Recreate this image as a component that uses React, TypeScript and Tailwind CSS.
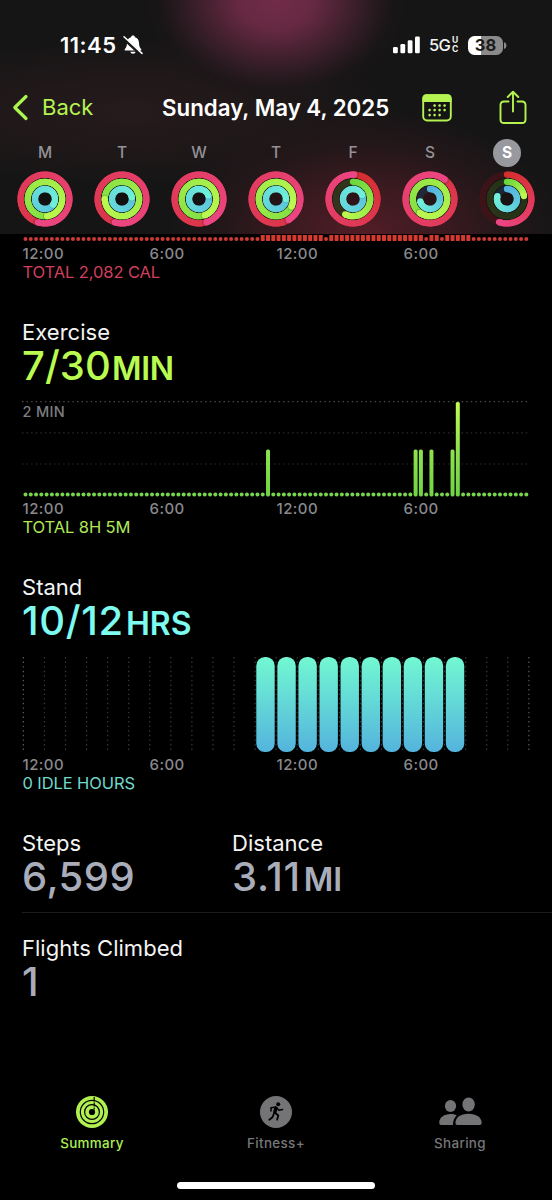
import React from "react";

type RGB = [number, number, number];
type Ring = { end: number; full: boolean };

const MOVE: [RGB, RGB] = [[212, 46, 46], [236, 70, 132]];
const EXERCISE: [RGB, RGB] = [[108, 214, 62], [188, 248, 80]];
const STAND: [RGB, RGB] = [[84, 178, 222], [112, 240, 218]];

const mix = (a: RGB, b: RGB, t: number) =>
  `rgb(${a.map((v, i) => Math.round(v + (b[i] - v) * t)).join(",")})`;

const at = (r: number, deg: number) => {
  const a = ((deg - 90) * Math.PI) / 180;
  return [28 + r * Math.cos(a), 28 + r * Math.sin(a)];
};

function Arc({ r, ring, colors, track }: { r: number; ring: Ring; colors: [RGB, RGB]; track: string }) {
  const w = 6.3;
  const start = ring.full ? ring.end - 358 : 0;
  const span = ring.end - start;
  const steps = Math.ceil(span / 9);
  const base = ring.full && ring.end > 20 ? 0.3 : 0;
  const [sx, sy] = at(r, start);
  const [ex, ey] = at(r, ring.end);
  const [dx, dy] = at(r, ring.end + 3.5);
  return (
    <g fill="none">
      <circle cx="28" cy="28" r={r} stroke={track} strokeWidth={w} />
      <circle cx={sx} cy={sy} r={w / 2} fill={mix(colors[0], colors[1], base)} />
      {Array.from({ length: steps }, (_, i) => {
        const a = start + (span * i) / steps;
        const b = Math.min(start + (span * (i + 1)) / steps + 8, ring.end);
        const [x1, y1] = at(r, a);
        const [x2, y2] = at(r, b);
        return (
          <path
            key={i}
            d={`M${x1} ${y1}A${r} ${r} 0 0 1 ${x2} ${y2}`}
            stroke={mix(colors[0], colors[1], base + ((1 - base) * (i + 0.5)) / steps)}
            strokeWidth={w}
          />
        );
      })}
      {ring.full && <circle cx={dx} cy={dy} r={w / 2} fill="#000" opacity=".16" />}
      <circle cx={ex} cy={ey} r={w / 2} fill={mix(colors[0], colors[1], 1)} />
    </g>
  );
}

const f = (end: number): Ring => ({ end, full: true });
const p = (end: number): Ring => ({ end, full: false });

const DAYS: { label: string; rings: [Ring, Ring, Ring] }[] = [
  { label: "M", rings: [f(197), f(173), f(125)] },
  { label: "T", rings: [f(197), f(270), f(82)] },
  { label: "W", rings: [f(162), f(160), f(70)] },
  { label: "T", rings: [f(149), f(116), f(92)] },
  { label: "F", rings: [f(3), p(207), f(66)] },
  { label: "S", rings: [f(37), f(216), p(256)] },
  { label: "S", rings: [p(199), p(80), p(286)] },
];

function Day({ label, rings, selected }: { label: string; rings: [Ring, Ring, Ring]; selected: boolean }) {
  return (
    <div className="flex w-[77px] flex-col items-center">
      <div
        className={
          selected
            ? "flex size-7 items-center justify-center rounded-full bg-[#98989f] text-[15.5px] font-bold text-white"
            : "flex size-7 items-center justify-center text-[15.5px] font-medium text-[#939297]"
        }
      >
        {label}
      </div>
      <svg className="mt-[4px] size-14" viewBox="0 0 56 56">
        <circle cx="28" cy="28" r="27" fill="#0c0c0c" opacity=".35" />
        <Arc r={24.4} ring={rings[0]} colors={MOVE} track="rgba(110,20,30,.4)" />
        <Arc r={17.2} ring={rings[1]} colors={EXERCISE} track="rgba(60,100,30,.4)" />
        <Arc r={10} ring={rings[2]} colors={STAND} track="rgba(30,70,100,.4)" />
      </svg>
    </div>
  );
}

const slotX = (i: number) => 3.5 + i * 5.272;

function MoveChart() {
  const low = new Set([57, 76, 79]);
  return (
    <svg className="block h-[10px] w-[508px]" viewBox="0 0 508 10">
      {Array.from({ length: 96 }, (_, i) =>
        i >= 45 && i <= 84 && !low.has(i) ? (
          <rect key={i} x={slotX(i) - 2} y="-2" width="4" height="7.9" rx=".6" fill="#d5392f" />
        ) : (
          <circle key={i} cx={slotX(i)} cy="3.9" r="2" fill="#cc3b35" />
        ),
      )}
    </svg>
  );
}

function ExerciseChart() {
  const bars: Record<number, number> = { 46: 47, 74: 47, 75: 47, 77: 47, 81: 47, 82: 94.5 };
  return (
    <svg className="block h-[98px] w-[508px]" viewBox="0 0 508 98">
      <defs>
        <linearGradient id="ex" gradientUnits="userSpaceOnUse" x1="0" y1="2" x2="0" y2="96">
          <stop offset="0" stopColor="#c4fb52" />
          <stop offset=".5" stopColor="#8fe24d" />
          <stop offset="1" stopColor="#70d445" />
        </linearGradient>
      </defs>
      {[1.7, 32.9, 64].map((y, i) => (
        <line key={y} x1="0" x2="507" y1={y} y2={y} stroke={i === 0 ? "#4c4c4e" : "#2e2e30"} strokeWidth="1.2" strokeDasharray="1.4 3.18" />
      ))}
      {Array.from({ length: 96 }, (_, i) =>
        bars[i] ? (
          <rect key={i} x={slotX(i) - 2} y={96.4 - bars[i]} width="4" height={bars[i]} rx="1.6" fill="url(#ex)" />
        ) : (
          <circle key={i} cx={slotX(i)} cy="94.4" r="2" fill="#78d550" />
        ),
      )}
    </svg>
  );
}

function StandChart() {
  return (
    <svg className="block h-[98px] w-[508px]" viewBox="0 0 508 98">
      <defs>
        <linearGradient id="st" x1="0" y1="0" x2="0" y2="1">
          <stop offset="0" stopColor="#72f8d2" />
          <stop offset="1" stopColor="#54b4dd" />
        </linearGradient>
      </defs>
      {Array.from({ length: 25 }, (_, i) => (
        <line
          key={i}
          x1={1.4 + i * 21.06}
          x2={1.4 + i * 21.06}
          y1="1"
          y2="95"
          stroke={i === 0 || i === 24 ? "#5a5a5c" : "#39393b"}
          strokeWidth="1.2"
          strokeDasharray="1.4 3.18"
        />
      ))}
      {Array.from({ length: 10 }, (_, i) => (
        <rect key={i} x={234.3 + i * 21.06} y="1.1" width="18.4" height="94.9" rx="8.6" fill="url(#st)" />
      ))}
    </svg>
  );
}

function Hours() {
  return (
    <div className="flex h-[18px] items-center pl-[0.5px] text-[15px] font-medium tracking-[0.45px] text-[#89898d]">
      <span className="w-[127px]">12:00</span>
      <span className="w-[127px]">6:00</span>
      <span className="w-[127px]">12:00</span>
      <span>6:00</span>
    </div>
  );
}

function Tab({ label, color, children }: { label: string; color: string; children: React.ReactNode }) {
  return (
    <div className={`flex w-[184px] flex-col items-center ${color}`}>
      <div className="flex h-8 items-center justify-center">{children}</div>
      <span className="mt-[6px] text-[13.4px] leading-[18px] font-medium tracking-[0.35px]">{label}</span>
    </div>
  );
}

const NAME = "h-7 text-[22px] leading-7 tracking-[0.02px] text-[#f4f4f4]";
const VALUE = "flex h-10 items-baseline text-[40px] leading-10 font-medium";
const TOTAL = "h-[18px] text-[16.5px] leading-[18px] tracking-[-0.1px] pl-[0.5px]";

export default function App() {
  return (
    <div className="flex h-[1200px] w-[552px] flex-col overflow-hidden bg-black font-['Inter',sans-serif] whitespace-nowrap">
      <header className="h-[234px] shrink-0 bg-[#151515] bg-[radial-gradient(ellipse_135px_105px_at_276px_0px,#702c49_0%,#662942_28%,#4a2232_48%,#2c1b22_70%,rgba(28,22,24,0.6)_86%,rgba(21,21,21,0)_100%),radial-gradient(ellipse_200px_125px_at_365px_234px,#521d26_0%,#3b1a20_38%,#24171a_70%,rgba(21,21,21,0)_100%),radial-gradient(ellipse_280px_75px_at_130px_112px,#261a1d_0%,#1f1819_50%,rgba(21,21,21,0)_100%)]">
        <div className="flex h-[90px] items-center pl-[60px]">
          <span className="w-[62px] text-[22px] font-semibold tracking-[0.5px] text-white">11:45</span>
          <svg className="size-[22px]" viewBox="0 0 22 22">
            <path d="M11 1.6c1.1 0 1.8.7 2 1.7 2.6.8 3.9 2.9 4 5.7.1 3.2.7 4.5 2 5.9.7.8.5 1.6-.6 1.600H3.600c-1.100 0-1.300-.8-.6-1.600 1.300-1.400 1.900-2.700 2-5.900.1-2.800 1.400-4.900 4-5.700.2-1 .9-1.700 2-1.700zM8.300 17.800h5.400c-.3 1.300-1.300 2-2.700 2s-2.400-.7-2.700-2z" fill="#fff" />
            <path d="M1.300 3.900 18.900 20.300" stroke="#191617" strokeWidth="3.4" />
            <path d="M2 2.700 20 19.400" stroke="#fff" strokeWidth="1.5" strokeLinecap="round" />
          </svg>
          <svg className="ml-[249px] h-[18px] w-[28px]" viewBox="0 0 28 18" fill="#fff">
            <rect x="0" y="11" width="4.8" height="6.3" rx="1.3" />
            <rect x="7.4" y="8" width="4.8" height="9.3" rx="1.3" />
            <rect x="14.7" y="4.3" width="4.8" height="13" rx="1.3" />
            <rect x="22" y=".5" width="4.8" height="16.8" rx="1.3" />
          </svg>
          <span className="ml-[8px] w-[23px] text-[16.5px] font-medium tracking-[-0.8px] text-[#f2f2f2]">5G</span>
          <span className="flex w-[7px] flex-col text-[8.5px] leading-[9px] font-bold text-[#f2f2f2]">
            <span>U</span>
            <span>C</span>
          </span>
          <span className="ml-[9px] flex h-[19px] w-[35px] items-center justify-center rounded-[6.5px] bg-[linear-gradient(90deg,#fff_38%,#8a8a8b_38%)] text-[16.5px] font-bold text-[#1c1c1c]">38</span>
          <svg className="ml-px h-[7px] w-[3px]" viewBox="0 0 3 7">
            <path d="M0 0q2.500 1.200 2.500 3.500T0 7z" fill="#8a8a8b" />
          </svg>
        </div>
        <div className="flex h-[35px] items-center text-[#b4f351]">
          <svg className="ml-[12px] h-[28px] w-[18px]" viewBox="0 0 18 28">
            <path d="M14 2.500 2.800 13.500 14 24.500" fill="none" stroke="#acf550" strokeWidth="3.200" strokeLinecap="round" strokeLinejoin="round" />
          </svg>
          <span className="ml-[12px] w-[120px] text-[22px]">Back</span>
          <span className="w-[260px] text-[22.3px] font-semibold text-white">Sunday, May 4, 2025</span>
          <svg className="h-[28px] w-[30px]" viewBox="0 0 30 28">
            <rect x="1.2" y="1.2" width="27.6" height="25.3" rx="4" fill="none" stroke="currentColor" strokeWidth="1.9" />
            <path d="M.4 8V4.500Q.4.300 4.500.3h21q4.100 0 4.100 4.200V8z" fill="currentColor" />
            {[[12, 11.5], [17, 11.5], [22, 11.5], [7, 16], [12, 16], [17, 16], [22, 16], [7, 21], [12, 21], [17, 21]].map(([x, y]) => (
              <circle key={`${x}-${y}`} cx={x + 0.6} cy={y + 0.1} r="1.3" fill="currentColor" />
            ))}
          </svg>
          <svg className="ml-[47px] h-[35px] w-[28px]" viewBox="0 0 28 35" fill="none" stroke="currentColor" strokeWidth="1.9" strokeLinecap="round" strokeLinejoin="round">
            <path d="M9.500 11.500H5q-3.500 0-3.500 3.500v14.500Q1.500 33 5 33h18q3.500 0 3.500-3.500V15q0-3.500-3.500-3.500h-4.500M14 21.500V2M8.700 7 14 1.800 19.300 7" />
          </svg>
        </div>
        <div className="mt-[14px] flex pl-[6.5px]">
          {DAYS.map((d, i) => (
            <Day key={i} label={d.label} rings={d.rings} selected={i === 6} />
          ))}
        </div>
      </header>

      <main className="flex h-[846px] shrink-0 flex-col pl-[22px]">
        <section>
          <div className="h-[11px] pt-px">
            <MoveChart />
          </div>
          <Hours />
          <p className={`${TOTAL} text-[#d23f5f]`}>TOTAL 2,082 CAL</p>
        </section>

        <section className="mt-[37px]">
          <h2 className={NAME}>Exercise</h2>
          <div className={`${VALUE} text-[#b9fb50]`}>
            <span className="tracking-[0.1px]">7/30</span>
            <span className="ml-px text-[32px] font-semibold tracking-[-0.3px]">MIN</span>
          </div>
          <div className="relative mt-[14px]">
            <ExerciseChart />
            <span className="absolute top-[3px] left-[0.5px] text-[14.5px] leading-[18px] font-medium tracking-[0.3px] text-[#7d7d81]">2 MIN</span>
          </div>
          <div className="mt-[2px]">
            <Hours />
          </div>
          <p className={`${TOTAL} text-[#b0e85a]`}>TOTAL 8H 5M</p>
        </section>

        <section className="mt-[37px]">
          <h2 className={NAME}>Stand</h2>
          <div className={`${VALUE} text-[#7dfbf0]`}>
            <span className="tracking-[0.7px]">10/12</span>
            <span className="ml-[2px] text-[32px] font-semibold">HRS</span>
          </div>
          <div className="mt-[15px]">
            <StandChart />
          </div>
          <div className="mt-[2px]">
            <Hours />
          </div>
          <p className={`${TOTAL} text-[#70d9cc]`}>0 IDLE HOURS</p>
        </section>

        <section className="mt-[37px] flex h-[84px] border-b border-[#1c1c1e] text-[#a9adba]">
          <div className="w-[210px]">
            <h2 className={NAME}>Steps</h2>
            <div className={VALUE}>
              <span className="tracking-[0.5px]">6,599</span>
            </div>
          </div>
          <div>
            <h2 className={NAME}>Distance</h2>
            <div className={VALUE}>
              <span className="tracking-[0.7px]">3.11</span>
              <span className="ml-[3px] text-[32px] font-semibold">MI</span>
            </div>
          </div>
        </section>

        <section className="mt-[21px] text-[#a9adba]">
          <h2 className={NAME}>Flights Climbed</h2>
          <div className={VALUE}>
            <span>1</span>
          </div>
        </section>
      </main>

      <nav className="flex h-[102px] shrink-0 pt-[15.5px]">
        <Tab label="Summary" color="text-[#b0ef53]">
          <svg className="size-8" viewBox="0 0 32 32">
            <circle cx="16" cy="16" r="16" fill="#b0f050" />
            <g fill="none" stroke="#000" strokeWidth="1.2">
              <circle cx="16" cy="16" r="11.7" />
              <circle cx="16" cy="16" r="7.4" />
            </g>
            <circle cx="16" cy="16" r="3.1" fill="#000" />
            <path d="M18.200 1v4.500M18.200 6.500v4M18.200 11.500v2" stroke="#000" strokeWidth="1.2" />
          </svg>
        </Tab>
        <Tab label="Fitness+" color="text-[#77777a]">
          <svg className="size-8" viewBox="0 0 32 32">
            <circle cx="16" cy="16" r="16" fill="#747477" />
            <circle cx="18.200" cy="8.200" r="2" fill="#000" />
            <g fill="none" stroke="#000" strokeLinecap="round" strokeLinejoin="round">
              <path d="M15.900 12.300 14.800 16.300" strokeWidth="3.400" />
              <path d="M11 15v-3.200l5-.8 3 3.300 3.600-.9" strokeWidth="1.500" />
              <path d="m15.300 17 3 2.500-1.200 4.200M14 17.500l-1.500 3.700-3.200 2.600" strokeWidth="1.800" />
            </g>
          </svg>
        </Tab>
        <Tab label="Sharing" color="text-[#77777a]">
          <svg className="h-8 w-[44px]" viewBox="0 0 44 32" fill="#747477">
            <ellipse cx="12.500" cy="10" rx="5.600" ry="6.100" />
            <path d="M1.200 26.500C1.500 21.500 6 18 12.500 18c2.300 0 4.400.5 6.200 1.400-2.400 2.300-3.800 5.300-3.700 9.600H3q-1.800 0-1.800-2.500z" />
            <ellipse cx="30.600" cy="8.500" rx="6.200" ry="6.900" />
            <path d="M17.400 26.500C17.800 21.500 22.500 17.800 30.500 17.800S43.300 21.500 43.700 26.500q.1 2.500-1.900 2.500H19.300q-2 0-1.900-2.500z" />
          </svg>
        </Tab>
      </nav>
      <div className="mx-auto h-[7px] w-[198px] shrink-0 rounded-full bg-white" />
    </div>
  );
}
